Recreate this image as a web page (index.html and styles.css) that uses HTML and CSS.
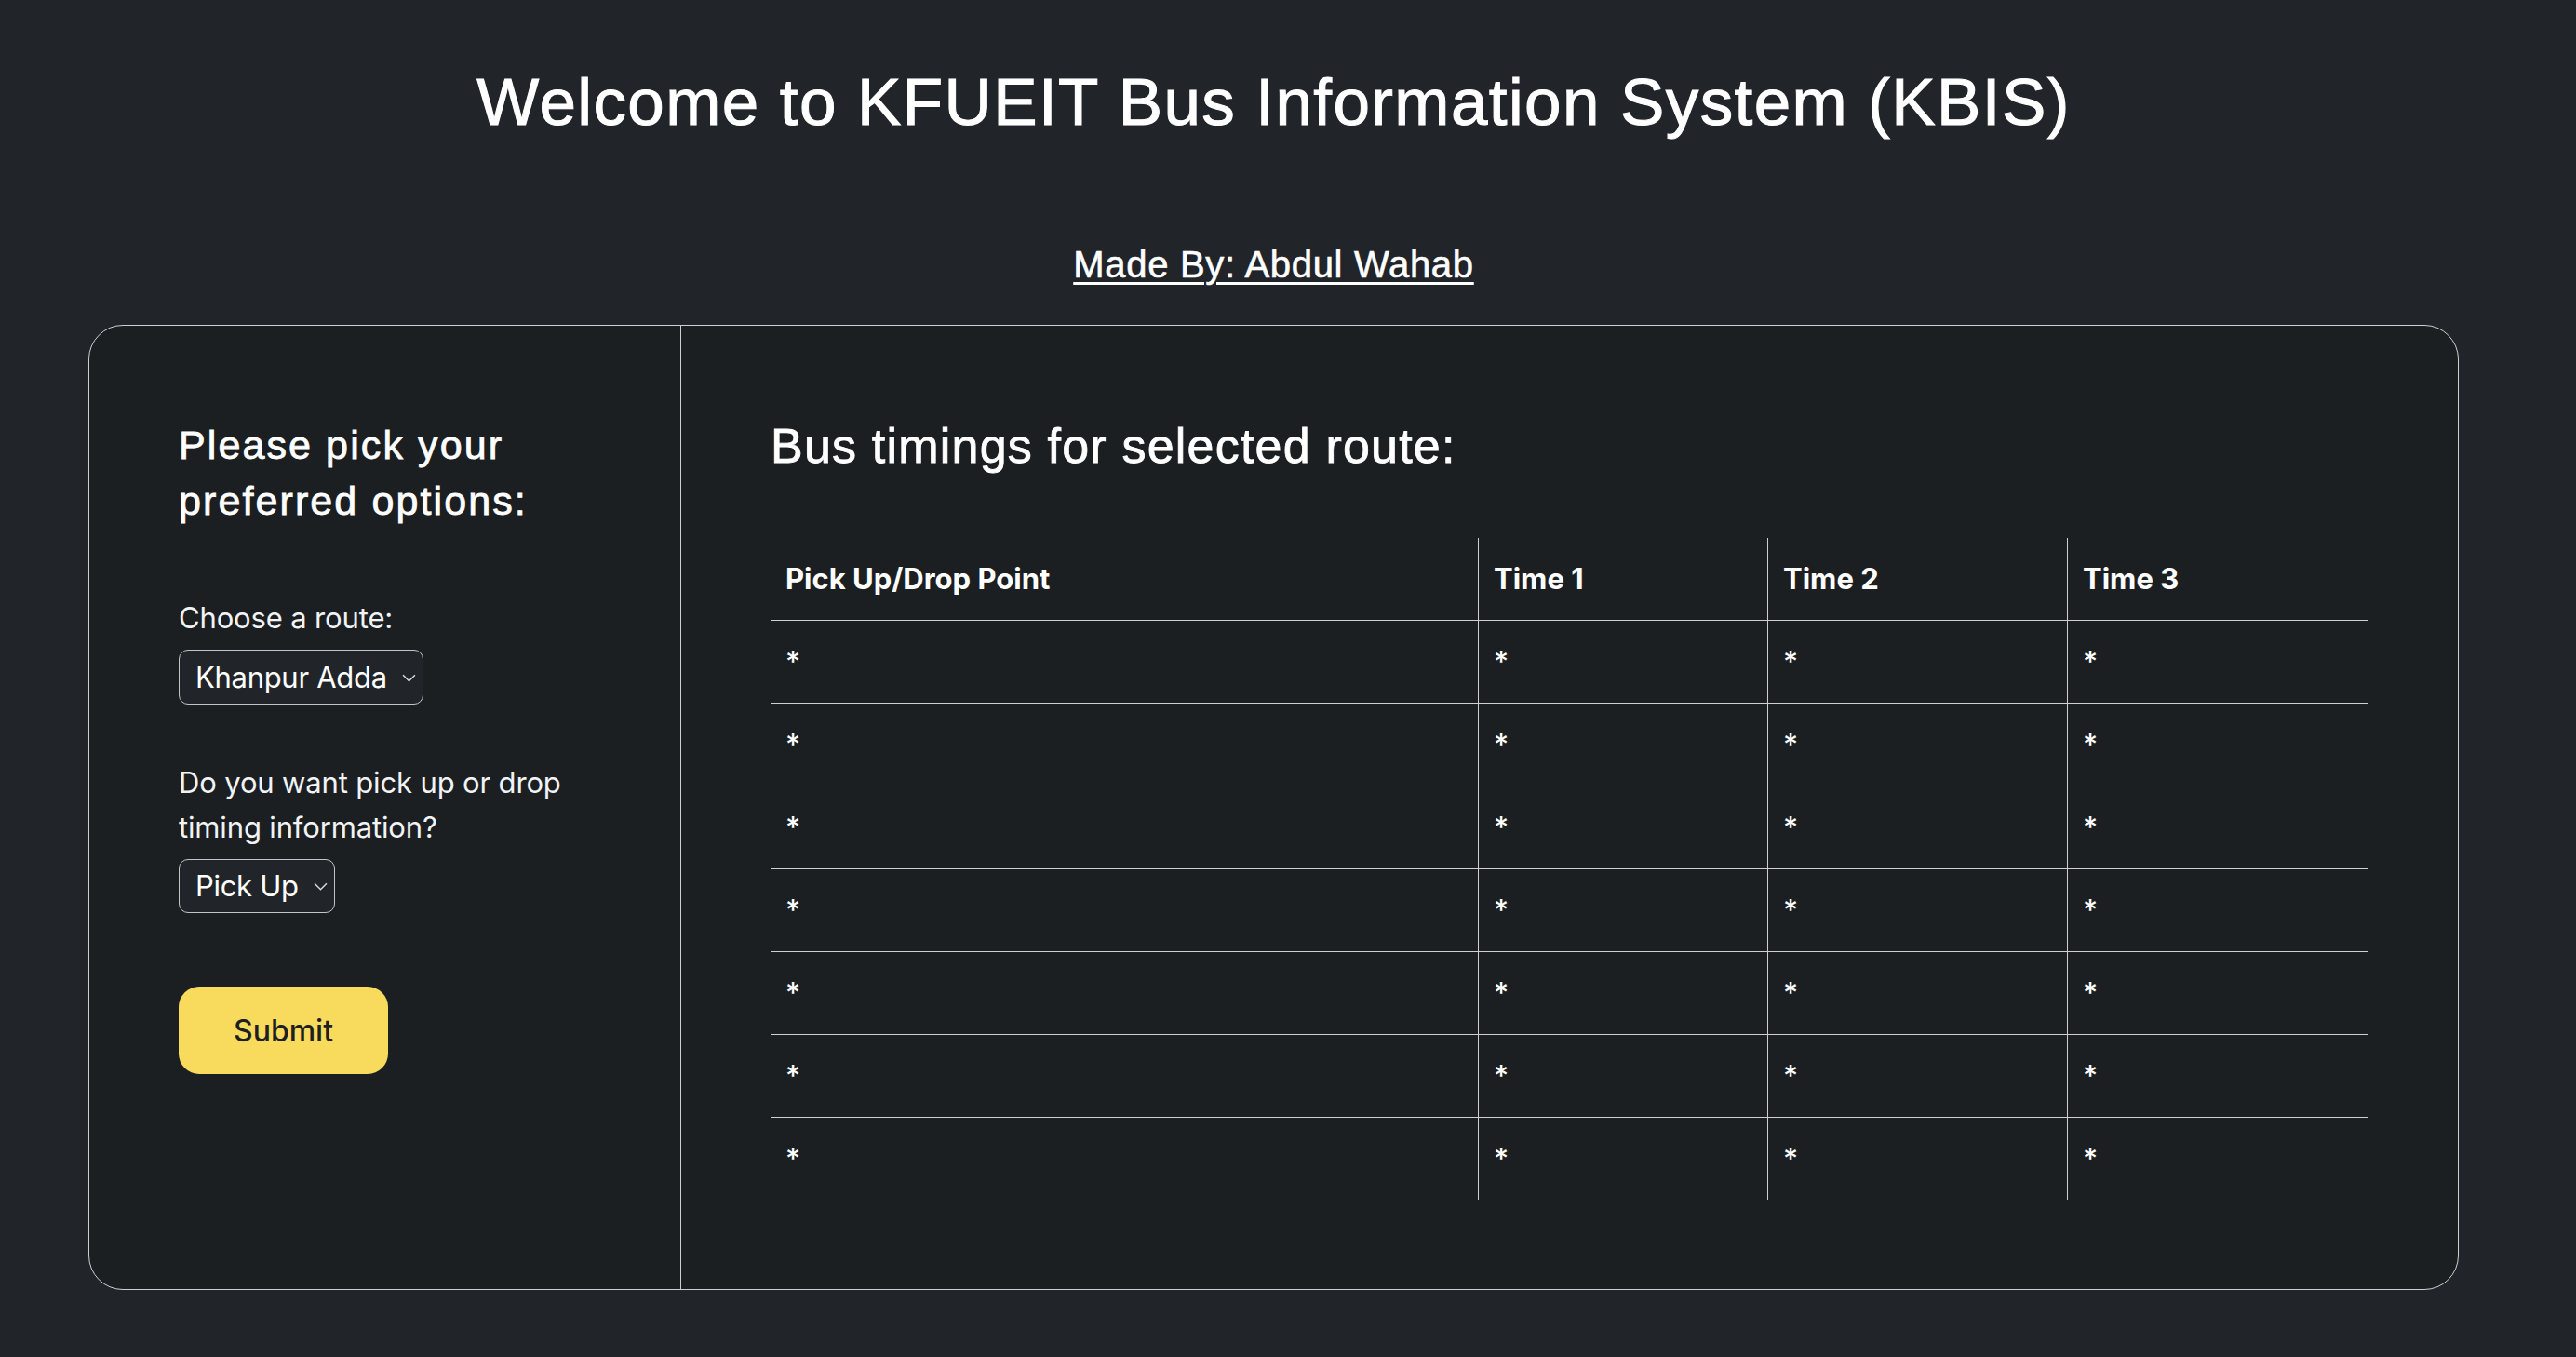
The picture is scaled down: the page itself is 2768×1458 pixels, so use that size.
FILE: index.html
```html
<!DOCTYPE html>
<html lang="en">
<head>
<meta charset="utf-8">
<title>KFUEIT Bus Information System (KBIS)</title>
<link rel="stylesheet" href="styles.css">
</head>
<body>
<div class="page">
  <h1 class="title">Welcome to KFUEIT Bus Information System (KBIS)</h1>
  <p class="author"><u>Made By: Abdul Wahab</u></p>

  <div class="card">
    <div class="panel-left">
      <h2 class="options-title">Please pick your preferred options:</h2>
      <form class="options-form">
        <label class="field-label label-route" for="route">Choose a route:</label>
        <span class="select-wrap">
          <select id="route" class="select select-route">
            <option>Khanpur Adda</option>
            <option>City</option>
          </select>
          <svg class="chev" viewBox="0 0 14 8" aria-hidden="true"><polyline points="1,1 7,7 13,1"/></svg>
        </span>
        <label class="field-label label-type" for="type">Do you want pick up or drop timing information?</label>
        <span class="select-wrap">
          <select id="type" class="select select-type">
            <option>Pick Up</option>
            <option>Drop</option>
          </select>
          <svg class="chev" viewBox="0 0 14 8" aria-hidden="true"><polyline points="1,1 7,7 13,1"/></svg>
        </span>
        <button type="button" class="submit">Submit</button>
      </form>
    </div>

    <div class="panel-right">
      <h2 class="timings-title">Bus timings for selected route:</h2>
      <table class="timings">
        <colgroup>
          <col class="c-point">
          <col class="c-time">
          <col class="c-time2">
          <col class="c-time3">
        </colgroup>
        <thead>
          <tr><th>Pick Up/Drop Point</th><th>Time 1</th><th>Time 2</th><th>Time 3</th></tr>
        </thead>
        <tbody>
          <tr><td>*</td><td>*</td><td>*</td><td>*</td></tr>
          <tr><td>*</td><td>*</td><td>*</td><td>*</td></tr>
          <tr><td>*</td><td>*</td><td>*</td><td>*</td></tr>
          <tr><td>*</td><td>*</td><td>*</td><td>*</td></tr>
          <tr><td>*</td><td>*</td><td>*</td><td>*</td></tr>
          <tr><td>*</td><td>*</td><td>*</td><td>*</td></tr>
          <tr><td>*</td><td>*</td><td>*</td><td>*</td></tr>
        </tbody>
      </table>
    </div>
  </div>
</div>
</body>
</html>
```

FILE: styles.css
```css
* { box-sizing: border-box; }

html, body { margin: 0; }

body {
  background: #212429;
  color: #ffffff;
  font-family: "Inter", "Liberation Sans", sans-serif;
}

.page {
  padding: 67px 126px 72px 95px;
}

.title {
  margin: 0;
  font-family: "Liberation Sans", sans-serif;
  font-weight: 400;
  font-size: 71px;
  line-height: 85px;
  letter-spacing: 1.4px;
  text-align: center;
  color: #ffffff;
  -webkit-text-stroke: 1px #ffffff;
}

.author {
  margin: 108px 0 0;
  font-family: "Liberation Sans", sans-serif;
  font-size: 40px;
  line-height: 48px;
  letter-spacing: 0.7px;
  text-align: center;
  color: #ffffff;
  -webkit-text-stroke: 0.6px #ffffff;
}

.author u {
  text-decoration-thickness: 3px;
  text-underline-offset: 5px;
}

.card {
  margin-top: 41px;
  display: flex;
  background: #1c1f22;
  border: 1px solid #cfcfcf;
  border-radius: 37px;
}

.panel-left {
  flex: 0 0 636px;
  padding: 96px;
  border-right: 1px solid #cfcfcf;
}

.panel-right {
  flex: 1 1 auto;
  padding: 96px;
}

.options-title {
  margin: 2px 0 0;
  font-family: "Liberation Sans", sans-serif;
  font-weight: 400;
  font-size: 43px;
  line-height: 60px;
  letter-spacing: 2.1px;
  color: #ffffff;
  -webkit-text-stroke: 0.8px #ffffff;
}

.options-form {
  display: flex;
  flex-direction: column;
  align-items: flex-start;
}

.field-label {
  display: block;
  font-size: 31px;
  line-height: 48px;
  letter-spacing: -0.15px;
  color: #f1f3f5;
  margin-bottom: 10px;
}

.label-route { margin-top: 72px; }
.label-type { margin-top: 60px; }

.select-wrap {
  position: relative;
  display: inline-block;
}

.select {
  appearance: none;
  -webkit-appearance: none;
  display: block;
  height: 59px;
  padding: 0 22px 0 17px;
  background: #212529;
  color: #ffffff;
  border: 1px solid #c4c4c4;
  border-radius: 10px;
  font-family: "Inter", "Liberation Sans", sans-serif;
  font-size: 31px;
  letter-spacing: -0.3px;
  line-height: 1.2;
}

.select-route { width: 263px; }
.select-type { width: 168px; height: 58px; }

.chev {
  position: absolute;
  right: 8px;
  top: 50%;
  width: 15px;
  height: 9px;
  margin-top: -4px;
  fill: none;
  stroke: #d8d8d8;
  stroke-width: 1.4;
  pointer-events: none;
}

.submit {
  margin-top: 79px;
  width: 225px;
  height: 94px;
  border: none;
  border-radius: 22px;
  background: #f8da5c;
  color: #1d1f22;
  font-family: "Inter", "Liberation Sans", sans-serif;
  font-weight: 500;
  font-size: 32px;
  cursor: pointer;
}

.timings-title {
  margin: 0 0 66px;
  font-family: "Liberation Sans", sans-serif;
  font-weight: 400;
  font-size: 52px;
  line-height: 66px;
  letter-spacing: 1.2px;
  color: #ffffff;
  -webkit-text-stroke: 0.8px #ffffff;
}

.timings {
  width: 100%;
  table-layout: fixed;
  border-collapse: separate;
  border-spacing: 0;
  color: #ffffff;
}

.c-point { width: 760px; }
.c-time { width: 311px; }
.c-time2 { width: 322px; }
.c-time3 { width: 324px; }

.timings th,
.timings td {
  padding: 20px 16px;
  font-size: 31px;
  line-height: 48px;
  text-align: left;
  border-bottom: 1px solid #cfcfcf;
}

.timings th { font-weight: 700; }
.timings td { font-weight: 500; }

.timings th + th,
.timings td + td {
  border-left: 1px solid #cfcfcf;
}

.timings tbody tr:last-child td {
  border-bottom: none;
}
```
